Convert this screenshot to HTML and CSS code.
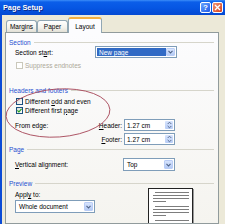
FILE: index.html
```html
<!DOCTYPE html>
<html lang="en">
  <head>
    <meta charset="UTF-8" />
    <title>Page Setup</title>
    <link rel="stylesheet" href="styles.css">
  </head>
  <body>
    <div class="window">
      <div class="titlebar">
        <span class="title">Page Setup</span>
        <span class="tbtn help">?</span>
        <span class="tbtn close">
          <svg width="7" height="7" viewBox="0 0 7 7"><path d="M1 1 L6 6 M6 1 L1 6" stroke="#fff" stroke-width="1.4"/></svg>
        </span>
      </div>
      <div class="client">
        <div class="tabs">
          <div class="tab">Margins</div>
          <div class="tab">Paper</div>
          <div class="tab active">Layout</div>
        </div>
        <div class="panel">
          <div class="ghead">Section</div>
          <div class="row r-start">
            <span class="label">Section st<u>a</u>rt:</span>
            <div class="select w-start">
              <span class="value hl">New page</span>
              <span class="drop"><svg width="5" height="4" viewBox="0 0 5 4"><path d="M0.5 0.8 L2.5 3 L4.5 0.8" fill="none" stroke="#4D6185" stroke-width="1.1"/></svg></span>
            </div>
          </div>
          <div class="check disabled m-supp">
            <span class="box off"></span><span>Suppress endnotes</span>
          </div>

          <div class="ghead m-hf">Headers and footers</div>
          <div class="check m-odd">
            <span class="box"></span><span>Different <u>o</u>dd and even</span>
          </div>
          <div class="check m-first">
            <span class="box"><svg width="5" height="5" viewBox="0 0 5 5"><path d="M0.4 2.4 L1.9 3.9 L4.6 0.9" fill="none" stroke="#21A121" stroke-width="1.2"/></svg></span><span>Different first <u>p</u>age</span>
          </div>
          <div class="row edge m-header">
            <span>From edge:</span>
            <span class="name"><u>H</u>eader:</span>
            <div class="spin">
              <span class="value">1.27 cm</span>
              <span class="arrows"><svg width="5" height="8" viewBox="0 0 5 8"><path d="M0.7 3 L2.5 1.2 L4.3 3 M0.7 5 L2.5 6.8 L4.3 5" fill="none" stroke="#4D6185" stroke-width="0.9"/></svg></span>
            </div>
          </div>
          <div class="row edge m-footer">
            <span></span>
            <span class="name"><u>F</u>ooter:</span>
            <div class="spin">
              <span class="value">1.27 cm</span>
              <span class="arrows"><svg width="5" height="8" viewBox="0 0 5 8"><path d="M0.7 3 L2.5 1.2 L4.3 3 M0.7 5 L2.5 6.8 L4.3 5" fill="none" stroke="#4D6185" stroke-width="0.9"/></svg></span>
            </div>
          </div>

          <div class="ghead">Page</div>
          <div class="row r-valign">
            <span class="label"><u>V</u>ertical alignment:</span>
            <div class="select w-top">
              <span class="value">Top</span>
              <span class="drop"><svg width="5" height="4" viewBox="0 0 5 4"><path d="M0.5 0.8 L2.5 3 L4.5 0.8" fill="none" stroke="#4D6185" stroke-width="1.1"/></svg></span>
            </div>
          </div>

          <div class="ghead m-prev">Preview</div>
          <div class="prev-body">
            <div class="prev-left">
              <div class="apply">Appl<u>y</u> to:</div>
              <div class="select w-whole">
                <span class="value">Whole document</span>
                <span class="drop"><svg width="5" height="4" viewBox="0 0 5 4"><path d="M0.5 0.8 L2.5 3 L4.5 0.8" fill="none" stroke="#4D6185" stroke-width="1.1"/></svg></span>
              </div>
            </div>
            <div class="page">
              <div class="para">
                <div class="ln first"></div>
                <div class="ln"></div>
                <div class="ln"></div>
                <div class="ln short"></div>
              </div>
              <div class="para">
                <div class="ln first"></div>
                <div class="ln"></div>
                <div class="ln"></div>
                <div class="ln short"></div>
              </div>
              <div class="para">
                <div class="ln first"></div>
                <div class="ln"></div>
              </div>
            </div>
          </div>
        </div>
      </div>
      <svg class="annot" width="225" height="224" viewBox="0 0 225 224">
        <ellipse cx="58" cy="113" rx="52" ry="24" transform="rotate(-4 58 113)" fill="none" stroke="#A8485A" stroke-width="0.9"/>
      </svg>
    </div>
  </body>
</html>
```

FILE: styles.css
```css
* {
  margin: 0;
  padding: 0;
  box-sizing: border-box;
}
body {
  width: 225px;
  height: 224px;
  overflow: hidden;
  background: #ece9d8;
  font-family: "Liberation Sans", Arial, sans-serif;
  font-size: 6.5px;
  color: #000;
}
u {
  text-decoration-thickness: 0.5px;
}
.window {
  position: relative;
  height: 224px;
  display: flex;
  flex-direction: column;
}

/* title bar */
.titlebar {
  height: 15px;
  flex: none;
  display: flex;
  align-items: center;
  padding: 0 2px 0 3px;
  background: linear-gradient(#3c8df8 0, #0b5ee9 2px, #0656e3 8px, #0449d2 15px);
}
.title {
  flex: 1;
  color: #fff;
  font-weight: bold;
  font-size: 7.3px;
  text-shadow: 1px 1px 0 #0a2a8c;
}
.tbtn {
  width: 11px;
  height: 11px;
  border: 1px solid #fff;
  border-radius: 2px;
  display: flex;
  align-items: center;
  justify-content: center;
  color: #fff;
  font-weight: bold;
  font-size: 8px;
}
.help {
  background: linear-gradient(135deg, #6aa6ff, #1f5ae8);
  margin-right: 1px;
}
.close {
  background: linear-gradient(135deg, #f39676, #d63f1b);
}

/* dialog body */
.client {
  flex: 1;
  min-height: 0;
  display: flex;
  flex-direction: column;
  border-left: 2px solid #0b4bd6;
  padding: 2px 6px 0 3px;
}
.tabs {
  display: flex;
  align-items: flex-end;
  height: 15px;
  padding-left: 1px;
}
.tab {
  width: 31px;
  height: 12px;
  border: 1px solid #91a7b4;
  border-bottom: none;
  border-radius: 3px 3px 0 0;
  background: linear-gradient(#fff, #f3f2ec 60%, #e2e0d6);
  display: flex;
  align-items: center;
  justify-content: center;
}
.tab.active {
  width: 34px;
  height: 16px;
  margin-bottom: -1px;
  position: relative;
  z-index: 1;
  background: #fcfcfe;
  border-top: 2px solid #f5b040;
}
.panel {
  flex: 1;
  min-height: 0;
  overflow: hidden;
  border: 1px solid #919b9c;
  background: linear-gradient(#fcfcfe, #f5f4ef);
  padding: 5px 4px 0 3px;
}

/* groups */
.ghead {
  display: flex;
  align-items: center;
  height: 8px;
  color: #1f4fd0;
}
.ghead::after {
  content: "";
  flex: 1;
  height: 1px;
  background: #d6d5cb;
  margin-left: 3px;
}
.m-hf {
  margin-top: 17px;
}
.m-prev {
  margin-top: 8px;
}

.row {
  display: flex;
  align-items: center;
  padding-left: 6px;
}
.r-start {
  height: 12px;
}
.r-start .label {
  width: 80px;
}
.r-valign {
  height: 13px;
  margin-top: 5px;
}
.r-valign .label {
  width: 108px;
}

/* combo boxes */
.select {
  display: flex;
  height: 100%;
  border: 1px solid #7f9db9;
  background: #fff;
  padding: 1px;
}
.w-start {
  width: 82px;
}
.w-top {
  width: 52px;
}
.w-whole {
  width: 80px;
  height: 13px;
  margin-top: 1px;
}
.select .value {
  flex: 1;
  display: flex;
  align-items: center;
  padding-left: 2px;
}
.select .value.hl {
  background: #316ac5;
  color: #fff;
}
.drop {
  width: 9px;
  display: flex;
  align-items: center;
  justify-content: center;
  border: 1px solid #bacdf6;
  border-radius: 1px;
  background: linear-gradient(#d7e4fd, #b4caf5);
}

/* checkboxes */
.check {
  display: flex;
  align-items: center;
  height: 8px;
  padding-left: 7px;
}
.check.disabled {
  color: #aca899;
}
.m-supp {
  margin-top: 3px;
}
.m-odd {
  margin-top: 3px;
}
.m-first {
  margin-top: 1px;
}
.box {
  width: 7px;
  height: 7px;
  margin-right: 2px;
  border: 1px solid #1c5180;
  background: linear-gradient(135deg, #dcdcd5, #fff);
  display: flex;
  align-items: center;
  justify-content: center;
}
.box.off {
  border-color: #cac8bb;
  background: #fff;
}

/* header / footer spinners */
.edge {
  display: grid;
  grid-template-columns: 82px 27px 51px;
  align-items: center;
  height: 12px;
}
.m-header {
  margin-top: 5px;
}
.m-footer {
  margin-top: 2px;
}
.edge .name {
  text-align: right;
  padding-right: 2px;
}
.spin {
  display: flex;
  height: 12px;
  border: 1px solid #7f9db9;
  background: #fff;
  padding: 1px;
}
.spin .value {
  flex: 1;
  display: flex;
  align-items: center;
  padding-left: 1px;
}
.arrows {
  width: 8px;
  display: flex;
  align-items: center;
  justify-content: center;
  border-radius: 1px;
  background: linear-gradient(#d7e4fd, #b8cdf6);
}

/* preview */
.prev-body {
  display: flex;
  padding-left: 6px;
}
.prev-left {
  width: 80px;
}
.apply {
  margin-top: 4px;
  height: 8px;
  line-height: 8px;
}
.page {
  margin-left: 53px;
  margin-top: 1px;
  width: 45px;
  height: 60px;
  border: 1px solid #222;
  background: #fff;
  box-shadow: 1px 1px 0 #9a9a9a;
  padding: 3px 3px 0 4px;
}
.para {
  margin-bottom: 4px;
}
.ln {
  height: 1px;
  background: #7d7d7d;
  margin-bottom: 2px;
}
.ln.first {
  margin-left: 2px;
}
.ln.short {
  width: 35%;
}

.annot {
  position: absolute;
  left: 0;
  top: 0;
  pointer-events: none;
}
```
